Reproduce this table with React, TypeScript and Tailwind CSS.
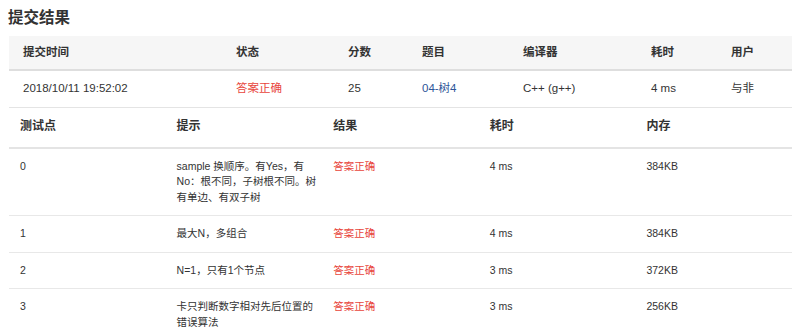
import React from 'react';

const summary = {
    time: '2018/10/11 19:52:02',
    status: '答案正确',
    score: '25',
    problem: '04-树4',
    compiler: 'C++ (g++)',
    cost: '4 ms',
    user: '与非',
};

const cases = [
    { id: '0', hint: 'sample 换顺序。有Yes，有No：根不同，子树根不同。树有单边、有双子树', result: '答案正确', time: '4 ms', mem: '384KB' },
    { id: '1', hint: '最大N，多组合', result: '答案正确', time: '4 ms', mem: '384KB' },
    { id: '2', hint: 'N=1，只有1个节点', result: '答案正确', time: '3 ms', mem: '372KB' },
    { id: '3', hint: '卡只判断数字相对先后位置的错误算法', result: '答案正确', time: '3 ms', mem: '256KB' },
];

const font = { fontFamily: '"Liberation Sans", "Noto Sans CJK SC", sans-serif' };

export default function App() {
    return (
        <div className="w-[800px] h-[335px] bg-white text-[#333] overflow-hidden" style={font}>
            <h2 className="pl-[8px] pt-[8px] text-[15.5px] leading-[20px] font-bold text-[#333]">提交结果</h2>
            <div className="px-[9px] pt-[8px]">
                <table className="w-[783px] table-fixed border-collapse text-[11.5px]">
                    <colgroup>
                        <col className="w-[213px]" />
                        <col className="w-[112px]" />
                        <col className="w-[74px]" />
                        <col className="w-[101px]" />
                        <col className="w-[128px]" />
                        <col className="w-[80px]" />
                        <col className="w-[75px]" />
                    </colgroup>
                    <thead>
                        <tr className="bg-[#f6f6f6] border-b-2 border-[#dedede] h-[34px]">
                            {['提交时间', '状态', '分数', '题目', '编译器', '耗时', '用户'].map((h) => (
                                <th key={h} className="text-left font-bold pl-[14px]">{h}</th>
                            ))}
                        </tr>
                    </thead>
                    <tbody>
                        <tr className="border-b border-[#e4e4e4] h-[37px]">
                            <td className="pl-[14px]">{summary.time}</td>
                            <td className="pl-[14px] text-[#e8453c]">{summary.status}</td>
                            <td className="pl-[14px]">{summary.score}</td>
                            <td className="pl-[14px] text-[#2d5598]">{summary.problem}</td>
                            <td className="pl-[14px]">{summary.compiler}</td>
                            <td className="pl-[14px]">{summary.cost}</td>
                            <td className="pl-[14px]">{summary.user}</td>
                        </tr>
                    </tbody>
                </table>

                <table className="w-[783px] table-fixed border-collapse text-[10.5px] leading-[15.5px]">
                    <thead>
                        <tr className="border-b-2 border-[#e4e4e4] h-[40px] text-[12px]">
                            {['测试点', '提示', '结果', '耗时', '内存'].map((h) => (
                                <th key={h} className="text-left font-bold pl-[11px] pb-[1px]">{h}</th>
                            ))}
                        </tr>
                    </thead>
                    <tbody>
                        {cases.map((c) => (
                            <tr key={c.id} className="border-b border-[#e8e8e8] align-top">
                                <td className="pl-[11px] pt-[10px] pb-[10px]">{c.id}</td>
                                <td className="pl-[11px] pt-[10px] pb-[10px]">
                                    <div className="w-[140px]">{c.hint}</div>
                                </td>
                                <td className="pl-[11px] pt-[10px] pb-[10px] text-[#e8453c]">{c.result}</td>
                                <td className="pl-[11px] pt-[10px] pb-[10px]">{c.time}</td>
                                <td className="pl-[11px] pt-[10px] pb-[10px]">{c.mem}</td>
                            </tr>
                        ))}
                    </tbody>
                </table>
            </div>
        </div>
    );
}
